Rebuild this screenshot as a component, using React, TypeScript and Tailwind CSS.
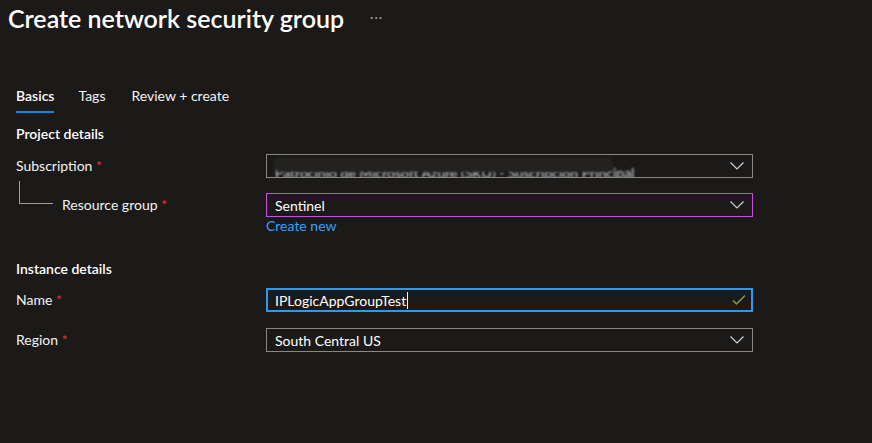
import React from 'react';

const FONT = { fontFamily: 'Lato, "Segoe UI", "Noto Sans", sans-serif' };

function Chevron() {
  return (
    <svg width="16" height="10" viewBox="0 0 16 10" className="shrink-0">
      <polyline points="1.5,1.5 8,8 14.5,1.5" fill="none" stroke="#d0d0d0" strokeWidth="1.2" />
    </svg>
  );
}

function Check() {
  return (
    <svg width="14" height="12" viewBox="0 0 14 12" className="shrink-0">
      <polyline points="1,6.5 4.5,10 13,1.5" fill="none" stroke="#7ea84b" strokeWidth="1.4" />
    </svg>
  );
}

function Label({ text }: { text: string }) {
  return (
    <span className="text-[14px] leading-5 text-[#f3f2f1]">
      {text} <span className="text-[#e0333d]">*</span>
    </span>
  );
}

export default function App() {
  return (
    <div className="min-h-[443px] w-[872px] bg-[#1b1a19] text-[#f3f2f1]" style={FONT}>
      {/* header */}
      <div className="flex h-[36px] items-center px-2">
        <h1 className="text-[25px] font-semibold leading-[36px] text-white">
          Create network security group
        </h1>
        <span className="ml-[26px] text-[13px] tracking-[1px] text-[#a19f9d]">···</span>
      </div>

      {/* tabs */}
      <div className="mt-[50px] flex gap-[24px] px-4 text-[14px]">
        <div className="flex flex-col">
          <span className="leading-5 font-semibold text-white">Basics</span>
          <span className="mt-[5px] h-[2px] bg-[#1683e0]" />
        </div>
        <span className="leading-5 text-[#f3f2f1]">Tags</span>
        <span className="ml-[2px] leading-5 text-[#f3f2f1]">Review + create</span>
      </div>

      <div className="px-4">
        <h2 className="mt-[11px] text-[14px] font-semibold leading-5 text-white">Project details</h2>

        {/* subscription */}
        <div className="mt-[10px] flex items-center">
          <div className="-mt-[2px] w-[250px]">
            <Label text="Subscription" />
          </div>
          <div className="relative flex h-[24px] w-[487px] items-center overflow-hidden border border-[#8a8886] pr-[7px] pl-[8px]">
            <span className="flex-1 translate-y-[6px] truncate text-[14px] text-[#d8d8d8] blur-[0.9px]">
              Patrocinio de Microsoft Azure (SKU) - Suscripción Principal
            </span>
            <div className="absolute top-[2px] left-[6px] h-[15px] w-[340px] rounded-full bg-[#232221] blur-[1px]" />
            <Chevron />
          </div>
        </div>

        {/* resource group */}
        <div className="mt-[15px] flex items-center">
          <div className="flex w-[250px] items-center">
            <div className="-mt-[13px] ml-[3px] h-[23px] w-[34px] self-start border-b border-l border-[#a19f9d]" />
            <span className="-mt-[2px] ml-[9px]">
              <Label text="Resource group" />
            </span>
          </div>
          <div className="flex h-[24px] w-[487px] items-center border border-[#c94fdf] pr-[7px] pl-[8px]">
            <span className="flex-1 text-[14px] text-white">Sentinel</span>
            <Chevron />
          </div>
        </div>
        <div className="flex">
          <div className="w-[250px]" />
          <span className="text-[14px] leading-[18px] text-[#3aa0f3]">Create new</span>
        </div>

        <h2 className="mt-[24px] text-[14px] font-semibold leading-5 text-white">Instance details</h2>

        {/* name */}
        <div className="mt-[9px] flex items-center">
          <div className="-mt-[2px] w-[250px]">
            <Label text="Name" />
          </div>
          <div className="flex h-[24px] w-[487px] items-center border-2 border-[#2899f5] pr-[5px] pl-[7px]">
            <span className="text-[14px] text-white">IPLogicAppGroupTest</span>
            <span className="ml-[1px] h-[17px] w-px bg-white" />
            <span className="flex-1" />
            <Check />
          </div>
        </div>

        {/* region */}
        <div className="mt-[16px] flex items-center">
          <div className="-mt-[2px] w-[250px]">
            <Label text="Region" />
          </div>
          <div className="flex h-[24px] w-[487px] items-center border border-[#8a8886] pr-[7px] pl-[8px]">
            <span className="flex-1 text-[14px] text-white">South Central US</span>
            <Chevron />
          </div>
        </div>
      </div>
    </div>
  );
}
